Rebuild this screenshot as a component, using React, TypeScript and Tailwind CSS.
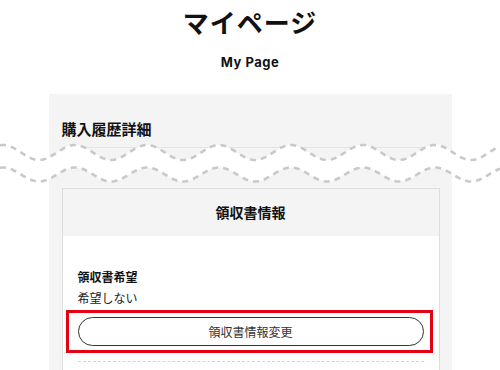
import React from 'react'

const wavePath = (center: number, amp: number) => {
    const pts: string[] = []
    for (let x = 0; x <= 500; x += 2) {
        const y = center - amp * Math.cos((2 * Math.PI * (x - 3)) / 72)
        pts.push(`${x},${y.toFixed(2)}`)
    }
    return pts
}

const WaveCut: React.FC = () => {
    const top = wavePath(12.5, 7.5)
    const bottom = wavePath(34.5, 7)
    const band = `M${top.join(' L')} L${[...bottom].reverse().join(' L')} Z`
    return (
        <svg width="500" height="48" viewBox="0 0 500 48" className="block">
            <rect x="49" y="0" width="403" height="48" fill="#f4f4f4" />
            <line x1="62" y1="7.5" x2="440" y2="7.5" stroke="#e4e4e4" strokeWidth="1" />
            <path d={band} fill="#ffffff" />
            <path d={`M${top.join(' L')}`} fill="none" stroke="#c9c9c9" strokeWidth="2.6" strokeDasharray="6 5" />
            <path d={`M${bottom.join(' L')}`} fill="none" stroke="#c9c9c9" strokeWidth="2.6" strokeDasharray="6 5" />
        </svg>
    )
}

const App: React.FC = () => {
    return (
        <div
            className="min-h-[370px] overflow-hidden bg-white text-[#111]"
            style={{ fontFamily: '"Noto Sans CJK JP", "Noto Sans", sans-serif' }}
        >
            <h1 className="pt-[6px] text-center text-[26px] font-bold leading-[32px] tracking-[1px]">マイページ</h1>
            <p
                className="mt-[16px] text-center text-[13px] font-bold leading-[16px] tracking-[0.5px]"
                style={{ fontFamily: 'Inter, "Noto Sans", sans-serif' }}
            >
                My Page
            </p>

            <div className="mx-auto mt-[24px] w-[403px] bg-[#f4f4f4] px-[13px] pt-[25px] pb-[1px]">
                <h2 className="text-[15px] font-bold leading-[20px]">購入履歴詳細</h2>
            </div>

            <WaveCut />

            <div className="mx-auto w-[403px] bg-[#f4f4f4] px-[13px] pb-[20px]">
                <div className="w-[378px] border border-[#dddddd] bg-white">
                    <div className="flex h-[47px] items-center justify-center bg-[#f4f4f4]">
                        <span className="text-[14px] font-bold">領収書情報</span>
                    </div>
                    <div className="px-[15px] pt-[32px] pb-[20px]">
                        <div className="text-[12px] font-bold leading-[18px]">領収書希望</div>
                        <div className="mt-[3px] text-[12px] leading-[18px] text-[#222]">希望しない</div>
                        <div className="relative mt-[10px]">
                            <button className="flex h-[29px] w-full items-center justify-center rounded-full border border-[#333] bg-white text-[12px] text-[#333]">
                                領収書情報変更
                            </button>
                            <div className="pointer-events-none absolute -top-[7px] -bottom-[7px] -left-[12px] -right-[9px] border-[3px] border-[#e50012]" />
                        </div>
                        <div className="mt-[15px] border-t border-dashed border-[#d4d4d4]" />
                    </div>
                </div>
            </div>
        </div>
    )
}

export default App
